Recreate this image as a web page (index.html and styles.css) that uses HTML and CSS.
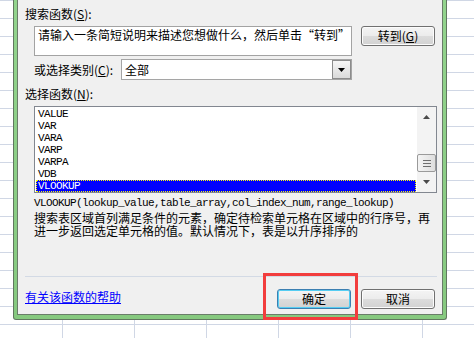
FILE: index.html
```html
<!DOCTYPE html>
<html>
<head>
  <title>插入函数</title>
  <meta charset="utf-8">
  <link rel="stylesheet" href="styles.css">
</head>
<body>
  <div class="frame">
    <div class="dialog">

      <div class="label">搜索函数(<u>S</u>):</div>
      <div class="search-row">
        <div class="search-box">请输入一条简短说明来描述您想做什么，然后单击“转到”</div>
        <button class="btn" type="button">转到(<u>G</u>)</button>
      </div>

      <div class="category-row">
        <span class="category-label">或选择类别(<u>C</u>):</span>
        <div class="select">
          <span class="select-value">全部</span>
          <span class="select-arrow">
            <svg width="7" height="4" viewBox="0 0 7 4"><path d="M0 0h7L3.5 4z" fill="#000"/></svg>
          </span>
        </div>
      </div>

      <div class="label label-list">选择函数(<u>N</u>):</div>
      <div class="listbox">
        <ul class="items">
          <li>VALUE</li>
          <li>VAR</li>
          <li>VARA</li>
          <li>VARP</li>
          <li>VARPA</li>
          <li>VDB</li>
          <li class="selected">VLOOKUP</li>
        </ul>
        <div class="scrollbar">
          <div class="scroll-arrow">
            <svg width="7" height="4" viewBox="0 0 7 4"><path d="M0 4h7L3.5 0z" fill="#4a4a4a"/></svg>
          </div>
          <div class="scroll-track">
            <div class="scroll-thumb"><span></span><span></span><span></span></div>
          </div>
          <div class="scroll-arrow">
            <svg width="7" height="4" viewBox="0 0 7 4"><path d="M0 0h7L3.5 4z" fill="#4a4a4a"/></svg>
          </div>
        </div>
      </div>

      <div class="syntax">VLOOKUP(lookup_value,table_array,col_index_num,range_lookup)</div>
      <p class="desc">搜索表区域首列满足条件的元素，确定待检索单元格在区域中的行序号，再进一步返回选定单元格的值。默认情况下，表是以升序排序的</p>

      <div class="separator"></div>

      <div class="footer">
        <a class="help" href="#">有关该函数的帮助</a>
        <div class="actions">
          <div class="ok-wrap">
            <button class="btn btn-ok" type="button">确定</button>
            <span class="highlight"></span>
          </div>
          <button class="btn" type="button">取消</button>
        </div>
      </div>

    </div>
  </div>
</body>
</html>
```

FILE: styles.css
```css
html, body {
  margin: 0;
  height: 338px;
  overflow: hidden;
}
body {
  font-family: "Noto Sans CJK SC", "DejaVu Sans", sans-serif;
  font-size: 12px;
  color: #000;
  background-color: #fff;
  background-image:
    repeating-linear-gradient(to bottom, #d0d7e5 0 1px, transparent 1px 18px),
    repeating-linear-gradient(to right, transparent 0 62px, #d0d7e5 62px 63px, transparent 63px 72px);
}
u {
  text-decoration: underline;
}

/* window frame */
.frame {
  margin-left: 13px;
  width: 434px;
  box-sizing: border-box;
  border: 1px solid #61775f;
  border-top: 0;
  border-radius: 0 0 3px 3px;
  padding: 0 3px 4px 3px;
  background: linear-gradient(to bottom, #93d48d, #86c97f);
}
.dialog {
  border: 1px solid #6a7d69;
  border-top: 0;
  background: #f0f0f0;
  padding: 7px 5px 5px 7px;
}

.label {
  line-height: 14px;
  height: 14px;
}
.label-list {
  margin-top: 7px;
}

/* search */
.search-row {
  display: flex;
  align-items: flex-start;
  gap: 9px;
  margin: 5px 0 0 9px;
}
.search-box {
  width: 318px;
  height: 30px;
  box-sizing: border-box;
  border: 1px solid #a3a3a3;
  background: #fff;
  padding: 1px 3px;
  line-height: 14px;
  white-space: nowrap;
  overflow: hidden;
}

.btn {
  width: 74px;
  height: 20px;
  box-sizing: border-box;
  padding: 0;
  font: inherit;
  line-height: 16px;
  color: #000;
  border: 1px solid #707070;
  border-radius: 3px;
  background: linear-gradient(to bottom, #f4f4f4 0%, #ececec 48%, #dcdcdc 52%, #d2d2d2 100%);
  box-shadow: inset 0 0 0 1px #fcfcfc;
}
.btn-ok {
  border-color: #3c7fb1;
  box-shadow: inset 0 0 0 1px #56cdf2;
}

/* category */
.category-row {
  display: flex;
  align-items: center;
  margin: 3px 0 0 9px;
}
.category-label {
  width: 87px;
  line-height: 14px;
}
.select {
  display: flex;
  width: 231px;
  height: 21px;
  box-sizing: border-box;
  border: 1px solid #a5a5a5;
  background: #fff;
}
.select-value {
  flex: 1;
  padding-left: 3px;
  line-height: 19px;
}
.select-arrow {
  width: 19px;
  height: 19px;
  box-sizing: border-box;
  border: 1px solid #8c8c8c;
  background: linear-gradient(to bottom, #f6f6f6, #dadada);
  display: flex;
  align-items: center;
  justify-content: center;
}

/* function list */
.listbox {
  display: flex;
  width: 403px;
  height: 87px;
  box-sizing: border-box;
  margin: 5px 0 0 9px;
  border: 1px solid #828790;
  background: #fff;
}
.items {
  flex: 1;
  list-style: none;
  margin: 0;
  padding: 1px 1px 0 1px;
}
.items li {
  height: 12px;
  line-height: 12px;
  padding-left: 2px;
  font-family: "Liberation Mono", monospace;
  font-size: 11px;
  letter-spacing: -0.6px;
  white-space: nowrap;
  overflow: hidden;
}
.items li.selected {
  background: #0000ff;
  color: #fff;
  outline: 1px dotted #ffff00;
  outline-offset: -1px;
}
.scrollbar {
  width: 19px;
  display: flex;
  flex-direction: column;
  background: #f3f3f3;
}
.scroll-arrow {
  height: 20px;
  display: flex;
  align-items: center;
  justify-content: center;
}
.scroll-track {
  flex: 1;
  display: flex;
  flex-direction: column;
  justify-content: flex-end;
}
.scroll-thumb {
  height: 18px;
  box-sizing: border-box;
  border: 1px solid #9a9a9a;
  border-radius: 2px;
  background: linear-gradient(to right, #f4f4f4, #dedede);
  display: flex;
  flex-direction: column;
  justify-content: center;
  align-items: center;
  gap: 2px;
}
.scroll-thumb span {
  width: 8px;
  height: 1px;
  background: #6f6f6f;
}

/* description */
.syntax {
  margin: 4px 0 0 9px;
  line-height: 12px;
  font-family: "Liberation Mono", monospace;
  font-size: 11px;
  letter-spacing: -0.6px;
  white-space: nowrap;
}
.desc {
  margin: 2px 0 0 9px;
  line-height: 13px;
}

.separator {
  margin-top: 39px;
  height: 1px;
  background: #d3dae5;
}

/* footer */
.footer {
  display: flex;
  justify-content: space-between;
  align-items: flex-start;
  margin-top: 12px;
}
.help {
  margin-top: 1px;
  line-height: 14px;
  color: #0000ff;
  text-decoration: underline;
}
.actions {
  display: flex;
  gap: 10px;
  margin-right: 2px;
}
.ok-wrap {
  position: relative;
}
.highlight {
  position: absolute;
  left: -14px;
  top: -16px;
  width: 95px;
  height: 47px;
  box-sizing: border-box;
  border: 3px solid #f23d3d;
}
```
